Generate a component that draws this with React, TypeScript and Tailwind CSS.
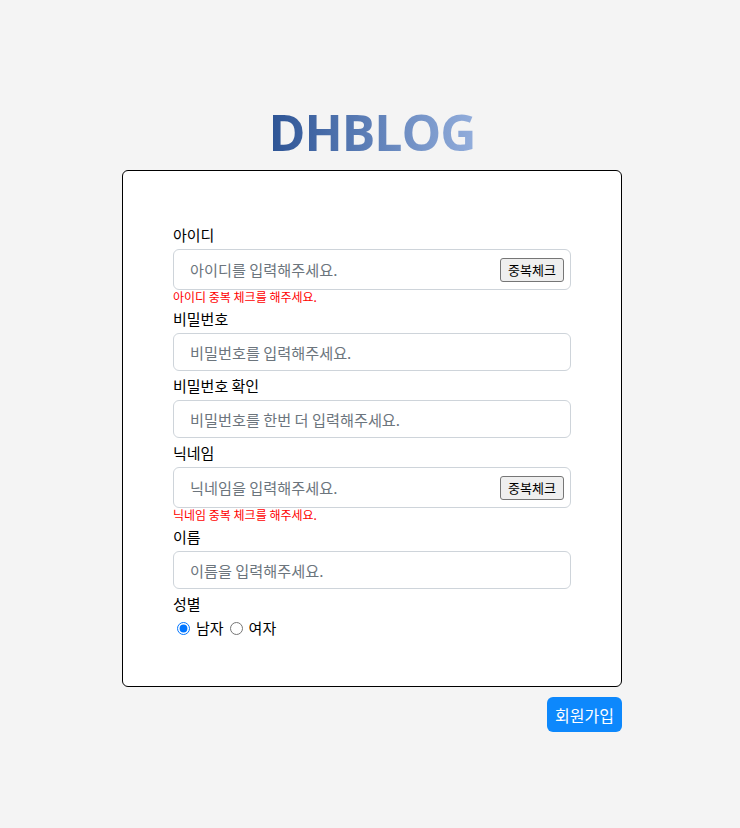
import React from "react";

const ko = { fontFamily: '"Noto Sans CJK KR", "Noto Sans", sans-serif' };

interface FieldProps {
  label: string;
  placeholder: string;
  check?: boolean;
  error?: string;
}

const Field: React.FC<FieldProps> = (props) => {
  return (
    <div>
      <div className="h-[29px] pt-[4px] text-[15px] leading-[22px] text-black">{props.label}</div>
      <div
        className={
          "flex items-center rounded-[6px] border border-[#ced4da] bg-white pl-[16px] pr-[6px] " +
          (props.check ? "h-[41px]" : "h-[38px]")
        }
      >
        <input
          className="min-w-0 flex-1 bg-transparent text-[15.2px] text-black outline-none placeholder:text-[#6c757d]"
          style={ko}
          placeholder={props.placeholder}
        />
        {props.check && (
          <button className="h-[24px] w-[64px] rounded-[3px] border border-[#767676] bg-[#efefef] text-[13px] leading-none text-black">
            중복체크
          </button>
        )}
      </div>
      {props.error && (
        <div className="h-[14px] text-[12px] leading-[14px] text-[#ff0000]">{props.error}</div>
      )}
    </div>
  );
};

export default function App() {
  return (
    <div className="min-h-[828px] bg-[#f4f4f4] pl-[4px]" style={ko}>
      <div className="mx-auto flex w-[500px] flex-col pt-[102px]">
        <h1
          className="mb-[8px] self-center bg-linear-to-r from-[#2c5394] to-[#93aedc] bg-clip-text text-center text-[50px] font-bold leading-[60px] tracking-[-1px] text-transparent"
          style={{ fontFamily: '"Open Sans", sans-serif' }}
        >
          DHBLOG
        </h1>
        <div className="rounded-[6px] border border-black bg-white px-[50px] pb-[48px] pt-[49px]">
          <Field label="아이디" placeholder="아이디를 입력해주세요." check error="아이디 중복 체크를 해주세요." />
          <Field label="비밀번호" placeholder="비밀번호를 입력해주세요." />
          <Field label="비밀번호 확인" placeholder="비밀번호를 한번 더 입력해주세요." />
          <Field label="닉네임" placeholder="닉네임을 입력해주세요." check error="닉네임 중복 체크를 해주세요." />
          <Field label="이름" placeholder="이름을 입력해주세요." />
          <div className="h-[29px] pt-[4px] text-[15px] leading-[22px] text-black">성별</div>
          <div className="flex h-[20px] items-center pl-[4px] text-[15px] text-black">
            <label className="flex items-center">
              <input type="radio" name="gender" defaultChecked className="m-0 h-[13px] w-[13px] accent-[#0075ff]" />
              <span className="ml-[6px]">남자</span>
            </label>
            <label className="ml-[6px] flex items-center">
              <input type="radio" name="gender" className="m-0 h-[13px] w-[13px]" />
              <span className="ml-[6px]">여자</span>
            </label>
          </div>
        </div>
        <div className="mt-[10px] flex justify-end">
          <button className="h-[35px] rounded-[6px] bg-[#0d88fc] px-[8px] text-[16px] text-white">회원가입</button>
        </div>
      </div>
    </div>
  );
}
